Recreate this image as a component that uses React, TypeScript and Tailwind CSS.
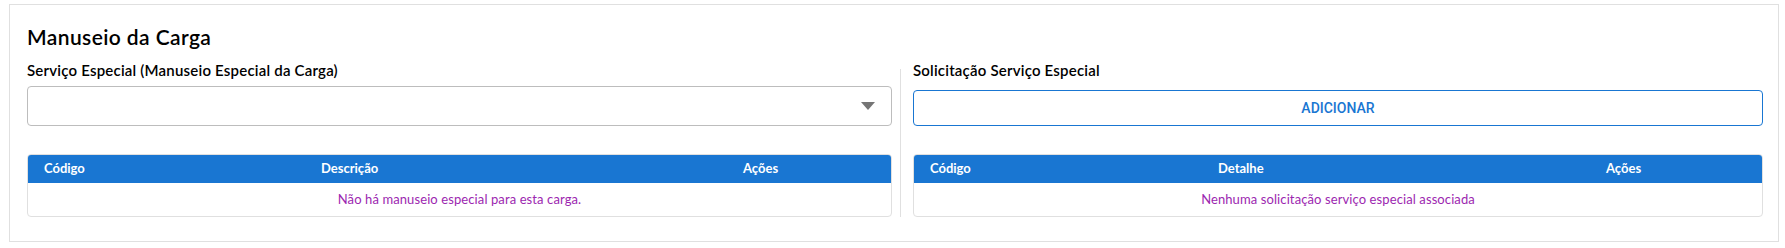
import React from "react";

const font = { fontFamily: "Lato, 'Noto Sans', sans-serif" };

function Table({
  cols,
  headers,
  empty,
}: {
  cols: string;
  headers: string[];
  empty: string;
}) {
  return (
    <div className="mt-[28px] rounded-[4px] border border-[#e0e0e0] overflow-hidden">
      <div className={`grid ${cols} h-[28px] items-center bg-[#1976d2] text-white text-[13px] font-bold`}>
        {headers.map((h) => (
          <div key={h} className="pl-[16px]">
            {h}
          </div>
        ))}
      </div>
      <div className="h-[33px] flex items-center justify-center text-[13px] tracking-[0.1px] text-[#9c27b0]">
        {empty}
      </div>
    </div>
  );
}

export default function App() {
  return (
    <div className="pt-[4px] pl-[9px] bg-white" style={font}>
      <div className="w-[1770px] h-[238px] border border-[#e0e0e0] pl-[17px] pr-[15px]">
        <div className="mt-[18px] h-[28px] text-[21px] leading-[28px] tracking-[0.4px] font-semibold text-black">
          Manuseio da Carga
        </div>
        <div className="mt-[9px] flex">
          <div className="w-[865px]">
            <div className="h-[20px] text-[15px] leading-[20px] tracking-[0.2px] font-semibold text-black">
              Serviço Especial (Manuseio Especial da Carga)
            </div>
            <div className="mt-[6px] h-[40px] rounded-[4px] border border-[#bdbdbd] relative flex items-center justify-end pr-[16px]">
              <svg width="14" height="8" viewBox="0 0 14 8">
                <polygon points="0,0 14,0 7,8" fill="#757575" />
              </svg>
            </div>
            <Table
              cols="grid-cols-[277px_422px_1fr]"
              headers={["Código", "Descrição", "Ações"]}
              empty="Não há manuseio especial para esta carga."
            />
          </div>
          <div className="ml-[8px] mt-[9px] w-px bg-[#e0e0e0]" />
          <div className="ml-[12px] w-[850px]">
            <div className="h-[20px] text-[15px] leading-[20px] tracking-[0.2px] font-semibold text-black">
              Solicitação Serviço Especial
            </div>
            <button
              className="mt-[10px] w-full h-[36px] rounded-[4px] border border-[#1976d2] text-[#1976d2] text-[14px] font-medium uppercase"
              style={{ fontFamily: "Roboto, sans-serif" }}
            >
              Adicionar
            </button>
            <Table
              cols="grid-cols-[288px_388px_1fr]"
              headers={["Código", "Detalhe", "Ações"]}
              empty="Nenhuma solicitação serviço especial associada"
            />
          </div>
        </div>
      </div>
    </div>
  );
}
